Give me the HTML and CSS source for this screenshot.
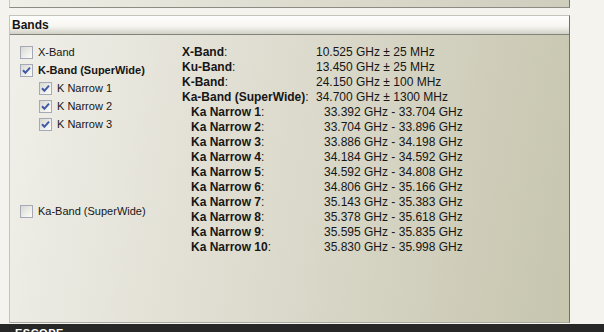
FILE: index.html
```html
<!DOCTYPE html>
<html lang="en">
<head>
    <meta charset="UTF-8">
    <title>Bands</title>
    <link rel="stylesheet" href="styles.css">
</head>
<body>

<div class="page">
    <div class="top-panel"></div>

    <div class="group">
        <div class="group-head">Bands</div>
        <div class="group-body">
            <div class="checks">
                <label class="check-row">
                    <span class="box"></span>
                    <span>X-Band</span>
                </label>
                <label class="check-row strong">
                    <span class="box on"></span>
                    <span>K-Band (SuperWide)</span>
                </label>
                <label class="check-row sub">
                    <span class="box on"></span>
                    <span>K Narrow 1</span>
                </label>
                <label class="check-row sub">
                    <span class="box on"></span>
                    <span>K Narrow 2</span>
                </label>
                <label class="check-row sub">
                    <span class="box on"></span>
                    <span>K Narrow 3</span>
                </label>
                <label class="check-row gap">
                    <span class="box"></span>
                    <span>Ka-Band (SuperWide)</span>
                </label>
            </div>

            <div class="freqs" id="freqs"></div>
        </div>
    </div>

    <div class="footer-bar"><span>ESCOPE</span></div>
</div>

<script>
const tick = '<svg width="13" height="13" viewBox="0 0 13 13"><path d="M3 6.2 L5.4 8.8 L10 3.6" fill="none" stroke="#3f5aa6" stroke-width="2"/></svg>';
document.querySelectorAll('.box.on').forEach(b => b.innerHTML = tick);

const bands = [
    ['X-Band', '10.525 GHz \u00b1 25 MHz'],
    ['Ku-Band', '13.450 GHz \u00b1 25 MHz'],
    ['K-Band', '24.150 GHz \u00b1 100 MHz'],
    ['Ka-Band (SuperWide)', '34.700 GHz \u00b1 1300 MHz']
];
const narrow = [
    ['33.392', '33.704'], ['33.704', '33.896'], ['33.886', '34.198'],
    ['34.184', '34.592'], ['34.592', '34.808'], ['34.806', '35.166'],
    ['35.143', '35.383'], ['35.378', '35.618'], ['35.595', '35.835'],
    ['35.830', '35.998']
];

let html = '';
bands.forEach(b => {
    html += `<div class="freq-row"><span class="name"><b>${b[0]}</b>:</span><span>${b[1]}</span></div>`;
});
narrow.forEach((n, i) => {
    html += `<div class="freq-row narrow"><span class="name"><b>Ka Narrow ${i + 1}</b>:</span><span>${n[0]} GHz - ${n[1]} GHz</span></div>`;
});
document.getElementById('freqs').innerHTML = html;
</script>
</body>
</html>
```

FILE: styles.css
```css
:root {
    --page: #f4f3ee;
    --text: #161616;
    --edge: #8c8c84;
}
body {
    margin: 0;
    background: var(--page);
    font-family: 'Liberation Sans', Arial, sans-serif;
    color: var(--text);
    height: 332px;
    overflow: hidden;
}
.page { width: 604px; }

.top-panel {
    margin-left: 9px;
    width: 559px;
    height: 7px;
    border-left: 1px solid #c9c9c1;
    border-right: 1px solid #77776f;
    border-bottom: 1px solid var(--edge);
    background: linear-gradient(100deg, #f0efe8 0%, #dddccf 50%, #cfcebd 100%);
}

.group {
    margin: 7px 0 0 9px;
    width: 559px;
    border: 1px solid #c4c4bb;
    border-right-color: #72726b;
    border-bottom-color: #a9a9a1;
}
.group-head {
    height: 18px;
    line-height: 18px;
    padding-left: 2px;
    font-size: 12px;
    font-weight: 700;
    background: linear-gradient(#fdfdfc 0%, #f7f6f2 55%, #d2d1c6 100%);
    border-bottom: 1px solid #83837b;
}
.group-body {
    height: 287px;
    display: flex;
    background: linear-gradient(100deg, #f0efe9 0%, #dedccf 45%, #c6c5ae 100%);
}

.checks {
    width: 162px;
    padding: 8px 0 0 10px;
    display: flex;
    flex-direction: column;
}
.check-row {
    height: 18px;
    display: flex;
    align-items: center;
    gap: 5px;
    font-size: 11px;
}
.check-row.strong { font-weight: 700; }
.check-row.sub { padding-left: 19px; }
.check-row.gap { margin-top: 69px; }
.box {
    width: 11px;
    height: 11px;
    border: 1px solid #a3a9b6;
    background: linear-gradient(135deg, #d9d9d3 0%, #f2f2ee 70%, #fbfbf9 100%);
    position: relative;
}
.box svg { position: absolute; left: -1px; top: -1px; }

.freqs {
    padding-top: 10px;
    font-size: 12px;
}
.freq-row {
    height: 15px;
    line-height: 15px;
    display: flex;
    white-space: nowrap;
}
.freq-row .name { width: 134px; }
.freq-row.narrow { padding-left: 9px; }
.freq-row.narrow .name { width: 133px; }

.footer-bar {
    margin-top: 1px;
    height: 8px;
    background: #272727;
    overflow: hidden;
    padding-left: 15px;
}
.footer-bar span {
    display: block;
    padding-top: 4px;
    color: #ffffff;
    font-size: 11px;
    font-weight: 700;
    line-height: 11px;
    letter-spacing: 0.5px;
}
```
